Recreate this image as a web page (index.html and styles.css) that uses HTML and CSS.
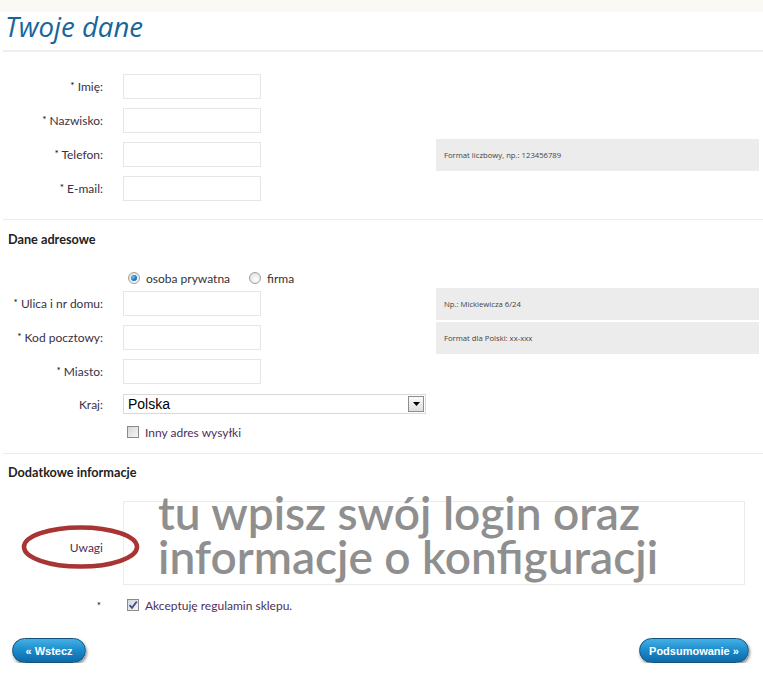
FILE: index.html
```html
<!DOCTYPE html>
<html lang="pl">
<head>
<meta charset="utf-8">
<title>Twoje dane</title>
<link rel="stylesheet" href="styles.css">
</head>
<body>
<div class="page">
  <div class="topbar"></div>
  <h1 class="title">Twoje dane</h1>

  <section class="sec sec-personal">
    <div class="row">
      <label class="lbl"><span class="req">*</span> Imię:</label>
      <input class="field" type="text">
    </div>
    <div class="row">
      <label class="lbl"><span class="req">*</span> Nazwisko:</label>
      <input class="field" type="text">
    </div>
    <div class="row">
      <label class="lbl"><span class="req">*</span> Telefon:</label>
      <input class="field" type="text">
      <div class="hint">Format liczbowy, np.: 123456789</div>
    </div>
    <div class="row">
      <label class="lbl"><span class="req">*</span> E-mail:</label>
      <input class="field" type="text">
    </div>
  </section>

  <section class="sec sec-address">
    <h2 class="sec-title">Dane adresowe</h2>
    <div class="radios">
      <span class="opt"><span class="radio on"></span>osoba prywatna</span>
      <span class="opt opt-second"><span class="radio"></span>firma</span>
    </div>
    <div class="row">
      <label class="lbl"><span class="req">*</span> Ulica i nr domu:</label>
      <input class="field" type="text">
      <div class="hint">Np.: Mickiewicza 6/24</div>
    </div>
    <div class="row">
      <label class="lbl"><span class="req">*</span> Kod pocztowy:</label>
      <input class="field" type="text">
      <div class="hint">Format dla Polski: xx-xxx</div>
    </div>
    <div class="row">
      <label class="lbl"><span class="req">*</span> Miasto:</label>
      <input class="field" type="text">
    </div>
    <div class="row-select">
      <label class="lbl">Kraj:</label>
      <div class="select">
        <span>Polska</span>
        <span class="arrow"><svg width="7" height="4" viewBox="0 0 7 4"><path d="M0 0h7L3.5 4z" fill="#000"/></svg></span>
      </div>
    </div>
    <div class="check-row">
      <span class="cb"></span>
      <span class="check-text">Inny adres wysyłki</span>
    </div>
  </section>

  <section class="sec sec-extra">
    <h2 class="sec-title">Dodatkowe informacje</h2>
    <div class="notes">
      <label class="lbl lbl-notes">Uwagi</label>
      <div class="area"></div>
      <svg class="ellipse" width="119" height="44" viewBox="0 0 119 44"><ellipse cx="59.5" cy="22" rx="56.5" ry="19.5" fill="none" stroke="#a83434" stroke-width="4.5"/></svg>
      <div class="overlay-text">
        <div class="overlay-line">tu wpisz swój login oraz</div>
        <div class="overlay-line">informacje o konfiguracji</div>
      </div>
    </div>
    <div class="accept">
      <span class="accept-star">*</span>
      <span class="accept-check">
        <span class="cb checked"><svg width="10" height="10" viewBox="0 0 10 10"><path d="M1.5 5.2 L4 7.8 L8.8 1.5" fill="none" stroke="#3b4f95" stroke-width="1.8"/></svg></span>
        <span class="check-text">Akceptuję regulamin sklepu.</span>
      </span>
    </div>
  </section>

  <div class="actions">
    <button class="btn btn-back" type="button">« Wstecz</button>
    <button class="btn btn-next" type="button">Podsumowanie »</button>
  </div>
</div>
</body>
</html>
```

FILE: styles.css
```css
* { box-sizing: border-box; }

body {
  margin: 0;
  background: #ffffff;
  font-family: Lato, "Open Sans", sans-serif;
  color: #3a3045;
}

.page { width: 763px; }

.topbar {
  height: 12px;
  background: #faf9f6;
}

.title {
  margin: 0 0 0 3px;
  padding: 0 0 10px 2px;
  font: italic 400 27.6px/28px "Open Sans", sans-serif;
  color: #17659c;
  border-bottom: 2px solid #eeeeee;
}

.sec { margin-left: 3px; }

.sec-personal { padding: 17px 0 14px; }

.sec-address {
  border-top: 1px solid #ebebeb;
  padding: 11px 0 13px;
}

.sec-extra {
  border-top: 1px solid #ebebeb;
  padding-top: 10px;
}

.sec-title {
  margin: 0 0 0 5px;
  font: 700 12.7px/16px Lato, sans-serif;
  color: #222222;
}

.row {
  display: grid;
  grid-template-columns: 120px 138px 175px 323px;
  height: 34px;
  align-items: center;
}

.lbl {
  text-align: right;
  padding-right: 20px;
  font-size: 12px;
  color: #3a3045;
}

.req {
  color: #000;
  font-size: 10px;
  vertical-align: 2px;
}

.field {
  width: 138px;
  height: 25px;
  margin: 0;
  padding: 0 4px;
  border: 1px solid #e6e6e6;
  background: #fff;
  font: 12px Lato, sans-serif;
  outline: none;
}

.hint {
  grid-column: 4;
  align-self: end;
  height: 32px;
  display: flex;
  align-items: center;
  padding-left: 8px;
  background: #ececec;
  font: 7.7px "Open Sans", sans-serif;
  color: #444444;
}

.radios {
  margin-top: 23px;
  height: 16px;
  display: flex;
  align-items: center;
  padding-left: 125px;
  font-size: 12px;
  color: #333;
}

.opt {
  display: flex;
  align-items: center;
  gap: 6px;
}

.opt-second { margin-left: 19px; }

.radio {
  width: 12px;
  height: 12px;
  border-radius: 50%;
  border: 1px solid #a0a0a0;
  background: radial-gradient(circle at 60% 65%, #ffffff 0%, #e4e4e4 70%, #cfcfcf 100%);
  display: flex;
  align-items: center;
  justify-content: center;
}

.radio.on::after {
  content: "";
  width: 6px;
  height: 6px;
  border-radius: 50%;
  background: radial-gradient(circle at 35% 35%, #7cc6f2 0%, #1f7cc4 50%, #0b4c86 100%);
}

.row-select {
  display: grid;
  grid-template-columns: 120px 303px;
  height: 20px;
  margin-top: 6px;
  align-items: center;
}

.select {
  height: 20px;
  border: 1px solid #d9d9d9;
  display: flex;
  align-items: center;
  justify-content: space-between;
  padding: 0 1px 0 4px;
  font: 14px "Liberation Sans", Arial, sans-serif;
  color: #000;
}

.arrow {
  width: 16px;
  height: 16px;
  border: 1px solid #8c8c8c;
  background: linear-gradient(#fafafa, #dedede);
  display: flex;
  align-items: center;
  justify-content: center;
}

.check-row {
  margin-top: 10px;
  height: 16px;
  display: flex;
  align-items: center;
  gap: 6px;
  padding-left: 124px;
}

.cb {
  width: 12px;
  height: 12px;
  border: 1px solid #8a8a8a;
  background: linear-gradient(135deg, #d6d6d6, #f7f7f7);
  display: flex;
  align-items: center;
  justify-content: center;
}

.check-text {
  font-size: 12px;
  color: #4e2f5c;
}

.notes {
  position: relative;
  margin-top: 21px;
  display: grid;
  grid-template-columns: 120px 622px;
  height: 84px;
  align-items: center;
}

.lbl-notes {
  margin-top: 8px;
  color: #4e2f5c;
}

.area {
  height: 84px;
  border: 1px solid #ebebeb;
  background: #fff;
}

.ellipse {
  position: absolute;
  left: 18px;
  top: 24px;
}

.overlay-text {
  position: absolute;
  left: 155px;
  top: -10px;
  font: 600 46px/44px Lato, sans-serif;
  color: #8f8f8f;
  white-space: nowrap;
}

.overlay-line { height: 44px; }

.accept {
  margin-top: 12px;
  height: 16px;
  display: grid;
  grid-template-columns: 120px auto;
  align-items: center;
}

.accept-star {
  text-align: right;
  padding-right: 22px;
  font-size: 10px;
  color: #000;
}

.accept-check {
  display: flex;
  align-items: center;
  gap: 6px;
  padding-left: 4px;
}

.actions {
  display: flex;
  justify-content: space-between;
  margin-top: 25px;
  padding: 0 14px 0 12px;
}

.btn {
  height: 25px;
  border-radius: 13px;
  border: 1px solid #14527c;
  background: linear-gradient(#45b0e4, #1b8acb 50%, #0d6aa9);
  color: #ffffff;
  font: bold 11px "Liberation Sans", Arial, sans-serif;
  box-shadow: 1px 2px 3px rgba(0, 0, 0, 0.45);
  padding: 0;
  cursor: pointer;
}

.btn-back { width: 74px; }
.btn-next { width: 110px; }
```
